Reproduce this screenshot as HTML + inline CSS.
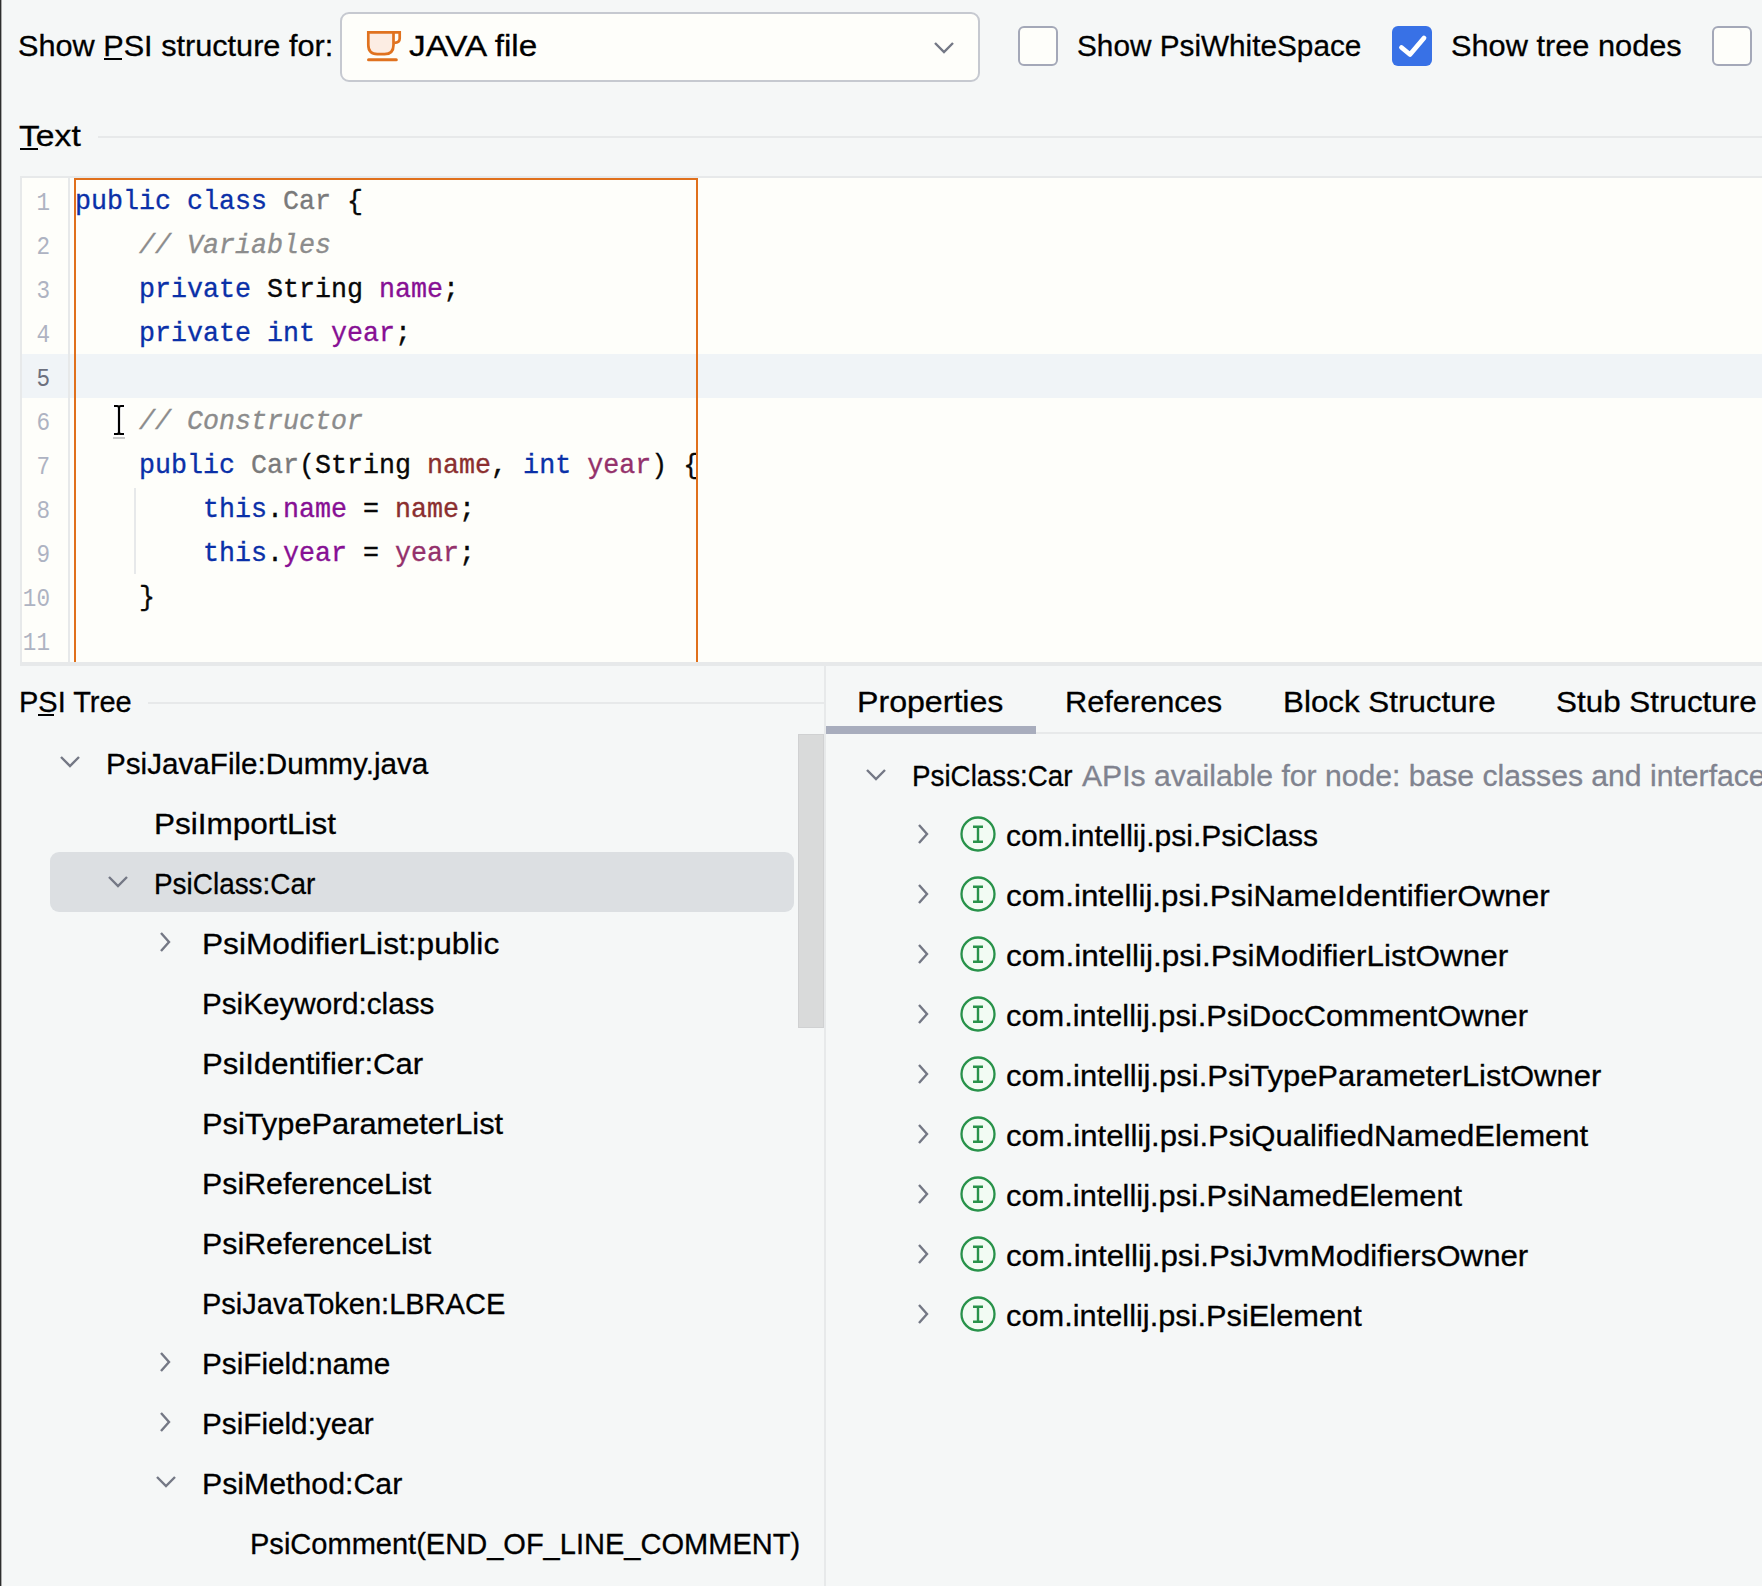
<!DOCTYPE html>
<html><head><meta charset="utf-8">
<style>
*{margin:0;padding:0;box-sizing:border-box}
html,body{width:1762px;height:1586px;overflow:hidden;background:#F5F7F7;position:relative;font-family:"Liberation Sans",sans-serif;color:#000}
.abs{position:absolute}
.t{position:absolute;white-space:nowrap;font-size:30px;line-height:30px;transform-origin:0 0;-webkit-text-stroke:0.3px currentColor}
.ul{position:absolute;height:2px;background:#000}
.sep{position:absolute;height:2px;background:#E7E9EA}
.cb{position:absolute;width:40px;height:40px;border:2px solid #A4A8B8;border-radius:6px;background:#FEFEFA}
.code{position:absolute;left:74.5px;font-size:28px;line-height:44px;white-space:pre;font-family:"Liberation Mono",monospace;color:#080808;transform-origin:0 0;transform:scaleX(0.95238);-webkit-text-stroke:0.35px currentColor}
.ln{position:absolute;left:0px;width:50px;text-align:right;font-size:26px;transform-origin:100% 0;transform:scaleX(0.87);line-height:44px;font-family:"Liberation Mono",monospace;color:#AEB3C2}
.kw{color:#0A30A8}
.cm{color:#8C8C8C;font-style:italic}
.fld{color:#871094}
.gry{color:#7A7A7A}
.p1{color:#8B2F2F}
.p2{color:#94316B}
</style></head><body>
<div class="abs" style="left:0;top:0;width:1px;height:1586px;background:#2E2E2E"></div><div class="abs" style="left:1px;top:0;width:1px;height:1586px;background:#A9AAAA"></div>

<div class="t" style="left:18.36px;top:30.5px;transform:scaleX(1.022);color:#000">Show PSI structure for:</div>
<div class="ul" style="left:104px;top:58px;width:18px"></div>
<div class="abs" style="left:340px;top:12px;width:640px;height:70px;border:2px solid #C6C9D0;border-radius:9px;background:#FEFEFA"></div>
<svg class="abs" style="left:364px;top:28px" width="40" height="36" viewBox="0 0 40 36">
  <path d="M4.3 4.3 H29.5 V17 Q29.5 26.2 20.5 26.2 H13.3 Q4.3 26.2 4.3 17 Z" fill="#FCEDE3" stroke="#E0721F" stroke-width="2.7"/>
  <path d="M29.5 4.3 H35.7 V10.5 Q35.7 14.8 30.2 14.8" fill="none" stroke="#E0721F" stroke-width="2.7"/>
  <line x1="4.5" y1="31.7" x2="32.3" y2="31.7" stroke="#E0721F" stroke-width="3" stroke-linecap="round"/>
</svg>
<div class="t" style="left:409.19px;top:30.5px;transform:scaleX(1.1088);color:#000">JAVA file</div>
<svg class="abs" style="left:932px;top:40px" width="24" height="16" viewBox="0 0 24 16"><path d="M3 3 L12.0 12 L21 3" fill="none" stroke="#747885" stroke-width="2.4" stroke-linecap="butt"/></svg>
<div class="cb" style="left:1018px;top:26px"></div>
<div class="t" style="left:1076.72px;top:30.5px;transform:scaleX(0.9915);color:#000">Show PsiWhiteSpace</div>
<div class="abs" style="left:1392px;top:26px;width:40px;height:40px;border-radius:6px;background:#3871E6"></div>
<svg class="abs" style="left:1392px;top:26px" width="40" height="40" viewBox="0 0 40 40"><path d="M9.5 21.5 L18 28.5 L32 12" fill="none" stroke="#FFFFFF" stroke-width="4.8" stroke-linecap="round" stroke-linejoin="round"/></svg>
<div class="t" style="left:1450.75px;top:30.5px;transform:scaleX(1.0248);color:#000">Show tree nodes</div>
<div class="cb" style="left:1712px;top:26px"></div>
<div class="t" style="left:19.08px;top:120.5px;transform:scaleX(1.1222);color:#000">Text</div>
<div class="ul" style="left:20px;top:148px;width:18px"></div>
<div class="sep" style="left:98px;top:136px;width:1664px"></div>
<div class="abs" style="left:20px;top:176px;width:1742px;height:490px;background:#E7E9EA"></div>
<div class="abs" style="left:22px;top:178px;width:1740px;height:484px;background:#FEFEFA"></div>
<div class="abs" style="left:0;top:0;width:1762px;height:662px;overflow:hidden">
<div class="abs" style="left:22px;top:354px;width:1740px;height:44px;background:#F0F4F7"></div>
<div class="abs" style="left:68px;top:178px;width:2px;height:484px;background:#E7E9EA"></div>
<div class="ln" style="top:181px">1</div>
<div class="ln" style="top:225px">2</div>
<div class="ln" style="top:269px">3</div>
<div class="ln" style="top:313px">4</div>
<div class="ln" style="top:357px;color:#6C707E">5</div>
<div class="ln" style="top:401px">6</div>
<div class="ln" style="top:445px">7</div>
<div class="ln" style="top:489px">8</div>
<div class="ln" style="top:533px">9</div>
<div class="ln" style="top:577px">10</div>
<div class="ln" style="top:621px">11</div>
<div class="abs" style="left:134px;top:488px;width:2px;height:86px;background:#E7E9EA"></div>
<div class="code" style="top:180px"><span class="kw">public class</span> <span class="gry">Car</span> {</div>
<div class="code" style="top:224px">    <span class="cm">// Variables</span></div>
<div class="code" style="top:268px">    <span class="kw">private</span> String <span class="fld">name</span>;</div>
<div class="code" style="top:312px">    <span class="kw">private int</span> <span class="fld">year</span>;</div>
<div class="code" style="top:400px">    <span class="cm">// Constructor</span></div>
<div class="code" style="top:444px">    <span class="kw">public</span> <span class="gry">Car</span>(String <span class="p1">name</span>, <span class="kw">int</span> <span class="p2">year</span>) {</div>
<div class="code" style="top:488px">        <span class="kw">this</span>.<span class="fld">name</span> = <span class="p1">name</span>;</div>
<div class="code" style="top:532px">        <span class="kw">this</span>.<span class="fld">year</span> = <span class="p2">year</span>;</div>
<div class="code" style="top:576px">    }</div>
<div class="abs" style="left:74px;top:178px;width:624px;height:520px;border:2px solid #E0701C"></div>
</div>
<svg class="abs" style="left:108px;top:400px" width="24" height="42" viewBox="0 0 24 42">
  <path d="M5 38 H17" stroke="#BDBDBD" stroke-width="2" opacity="0.8"/>
  <path d="M6 6 H9 Q11 6 11 8 V32 Q11 34 9 34 H6 M16 6 H13 Q11 6 11 8 M11 32 Q11 34 13 34 H16" fill="none" stroke="#FFFFFF" stroke-width="5.5" stroke-linecap="square"/>
  <path d="M6 6 H9 Q11 6 11 8 V32 Q11 34 9 34 H6 M16 6 H13 Q11 6 11 8 M11 32 Q11 34 13 34 H16" fill="none" stroke="#000000" stroke-width="2.2"/>
</svg>
<div class="abs" style="left:20px;top:662px;width:1742px;height:4px;background:#E7E9EA"></div>
<div class="abs" style="left:824px;top:666px;width:2px;height:920px;background:#E7E9EA"></div>
<div class="t" style="left:19.47px;top:686.5px;transform:scaleX(0.9655);color:#000">PSI Tree</div>
<div class="ul" style="left:38px;top:714px;width:16px"></div>
<div class="sep" style="left:148px;top:702px;width:676px"></div>
<div class="abs" style="left:50px;top:852px;width:744px;height:60px;border-radius:9px;background:#DCDFE2"></div>
<div class="abs" style="left:798px;top:734px;width:26px;height:294px;background:#D9DADA;border:1px solid #D0D1D2"></div>
<svg class="abs" style="left:58px;top:754px" width="24" height="16" viewBox="0 0 24 16"><path d="M3 3 L12.0 12 L21 3" fill="none" stroke="#747885" stroke-width="2.4" stroke-linecap="butt"/></svg>
<div class="t" style="left:105.82px;top:748.5px;transform:scaleX(0.988);color:#000">PsiJavaFile:Dummy.java</div>
<div class="t" style="left:153.7px;top:808.5px;transform:scaleX(1.0497);color:#000">PsiImportList</div>
<svg class="abs" style="left:106px;top:874px" width="24" height="16" viewBox="0 0 24 16"><path d="M3 3 L12.0 12 L21 3" fill="none" stroke="#747885" stroke-width="2.4" stroke-linecap="butt"/></svg>
<div class="t" style="left:153.94px;top:868.5px;transform:scaleX(0.9304);color:#000">PsiClass:Car</div>
<svg class="abs" style="left:158px;top:930px" width="15" height="24" viewBox="0 0 15 24"><path d="M3 3 L11 12.0 L3 21" fill="none" stroke="#747885" stroke-width="2.4" stroke-linecap="butt"/></svg>
<div class="t" style="left:202.09px;top:928.5px;transform:scaleX(1.0548);color:#000">PsiModifierList:public</div>
<div class="t" style="left:202.22px;top:988.5px;transform:scaleX(0.9884);color:#000">PsiKeyword:class</div>
<div class="t" style="left:202.13px;top:1048.5px;transform:scaleX(1.0365);color:#000">PsiIdentifier:Car</div>
<div class="t" style="left:202.15px;top:1108.5px;transform:scaleX(1.0261);color:#000">PsiTypeParameterList</div>
<div class="t" style="left:202.18px;top:1168.5px;transform:scaleX(1.0111);color:#000">PsiReferenceList</div>
<div class="t" style="left:202.18px;top:1228.5px;transform:scaleX(1.0111);color:#000">PsiReferenceList</div>
<div class="t" style="left:202.27px;top:1288.5px;transform:scaleX(0.9674);color:#000">PsiJavaToken:LBRACE</div>
<svg class="abs" style="left:158px;top:1350px" width="15" height="24" viewBox="0 0 15 24"><path d="M3 3 L11 12.0 L3 21" fill="none" stroke="#747885" stroke-width="2.4" stroke-linecap="butt"/></svg>
<div class="t" style="left:202.22px;top:1348.5px;transform:scaleX(0.9904);color:#000">PsiField:name</div>
<svg class="abs" style="left:158px;top:1410px" width="15" height="24" viewBox="0 0 15 24"><path d="M3 3 L11 12.0 L3 21" fill="none" stroke="#747885" stroke-width="2.4" stroke-linecap="butt"/></svg>
<div class="t" style="left:202.22px;top:1408.5px;transform:scaleX(0.9901);color:#000">PsiField:year</div>
<svg class="abs" style="left:154px;top:1474px" width="24" height="16" viewBox="0 0 24 16"><path d="M3 3 L12.0 12 L21 3" fill="none" stroke="#747885" stroke-width="2.4" stroke-linecap="butt"/></svg>
<div class="t" style="left:202.18px;top:1468.5px;transform:scaleX(1.0092);color:#000">PsiMethod:Car</div>
<div class="t" style="left:250.06px;top:1528.5px;transform:scaleX(0.9678);color:#000">PsiComment(END_OF_LINE_COMMENT)</div>
<div class="t" style="left:857.06px;top:686.5px;transform:scaleX(1.0709);color:#000">Properties</div>
<div class="t" style="left:1064.55px;top:686.5px;transform:scaleX(1.0247);color:#000">References</div>
<div class="t" style="left:1282.61px;top:686.5px;transform:scaleX(1.045);color:#000">Block Structure</div>
<div class="t" style="left:1556.31px;top:686.5px;transform:scaleX(1.0468);color:#000">Stub Structure</div>
<div class="sep" style="left:826px;top:732px;width:936px"></div>
<div class="abs" style="left:826px;top:726px;width:210px;height:8px;background:#A8ADBD"></div>
<svg class="abs" style="left:864px;top:767px" width="24" height="16" viewBox="0 0 24 16"><path d="M3 3 L12.0 12 L21 3" fill="none" stroke="#747885" stroke-width="2.4" stroke-linecap="butt"/></svg>
<div class="t" style="left:911.85px;top:760.5px;transform:scaleX(0.9257);color:#000">PsiClass:Car</div>
<div class="t" style="left:1081.8px;top:760.5px;transform:scaleX(1.0047);color:#80838F">APIs available for node: base classes and interfaces</div>
<svg class="abs" style="left:916px;top:822px" width="15" height="24" viewBox="0 0 15 24"><path d="M3 3 L11 12.0 L3 21" fill="none" stroke="#747885" stroke-width="2.4" stroke-linecap="butt"/></svg>
<svg class="abs" style="left:958px;top:814px" width="40" height="40" viewBox="0 0 40 40"><circle cx="20" cy="20" r="16.5" fill="#F2FBF3" stroke="#28924A" stroke-width="2.3"/><path d="M15 12.8 H25 M15 27.8 H25 M20 12.8 V27.8" fill="none" stroke="#28924A" stroke-width="2.4"/></svg>
<div class="t" style="left:1006.3px;top:820.5px;transform:scaleX(1.001);color:#000">com.intellij.psi.PsiClass</div>
<svg class="abs" style="left:916px;top:882px" width="15" height="24" viewBox="0 0 15 24"><path d="M3 3 L11 12.0 L3 21" fill="none" stroke="#747885" stroke-width="2.4" stroke-linecap="butt"/></svg>
<svg class="abs" style="left:958px;top:874px" width="40" height="40" viewBox="0 0 40 40"><circle cx="20" cy="20" r="16.5" fill="#F2FBF3" stroke="#28924A" stroke-width="2.3"/><path d="M15 12.8 H25 M15 27.8 H25 M20 12.8 V27.8" fill="none" stroke="#28924A" stroke-width="2.4"/></svg>
<div class="t" style="left:1006.25px;top:880.5px;transform:scaleX(1.0451);color:#000">com.intellij.psi.PsiNameIdentifierOwner</div>
<svg class="abs" style="left:916px;top:942px" width="15" height="24" viewBox="0 0 15 24"><path d="M3 3 L11 12.0 L3 21" fill="none" stroke="#747885" stroke-width="2.4" stroke-linecap="butt"/></svg>
<svg class="abs" style="left:958px;top:934px" width="40" height="40" viewBox="0 0 40 40"><circle cx="20" cy="20" r="16.5" fill="#F2FBF3" stroke="#28924A" stroke-width="2.3"/><path d="M15 12.8 H25 M15 27.8 H25 M20 12.8 V27.8" fill="none" stroke="#28924A" stroke-width="2.4"/></svg>
<div class="t" style="left:1006.25px;top:940.5px;transform:scaleX(1.0495);color:#000">com.intellij.psi.PsiModifierListOwner</div>
<svg class="abs" style="left:916px;top:1002px" width="15" height="24" viewBox="0 0 15 24"><path d="M3 3 L11 12.0 L3 21" fill="none" stroke="#747885" stroke-width="2.4" stroke-linecap="butt"/></svg>
<svg class="abs" style="left:958px;top:994px" width="40" height="40" viewBox="0 0 40 40"><circle cx="20" cy="20" r="16.5" fill="#F2FBF3" stroke="#28924A" stroke-width="2.3"/><path d="M15 12.8 H25 M15 27.8 H25 M20 12.8 V27.8" fill="none" stroke="#28924A" stroke-width="2.4"/></svg>
<div class="t" style="left:1006.27px;top:1000.5px;transform:scaleX(1.0264);color:#000">com.intellij.psi.PsiDocCommentOwner</div>
<svg class="abs" style="left:916px;top:1062px" width="15" height="24" viewBox="0 0 15 24"><path d="M3 3 L11 12.0 L3 21" fill="none" stroke="#747885" stroke-width="2.4" stroke-linecap="butt"/></svg>
<svg class="abs" style="left:958px;top:1054px" width="40" height="40" viewBox="0 0 40 40"><circle cx="20" cy="20" r="16.5" fill="#F2FBF3" stroke="#28924A" stroke-width="2.3"/><path d="M15 12.8 H25 M15 27.8 H25 M20 12.8 V27.8" fill="none" stroke="#28924A" stroke-width="2.4"/></svg>
<div class="t" style="left:1006.27px;top:1060.5px;transform:scaleX(1.0318);color:#000">com.intellij.psi.PsiTypeParameterListOwner</div>
<svg class="abs" style="left:916px;top:1122px" width="15" height="24" viewBox="0 0 15 24"><path d="M3 3 L11 12.0 L3 21" fill="none" stroke="#747885" stroke-width="2.4" stroke-linecap="butt"/></svg>
<svg class="abs" style="left:958px;top:1114px" width="40" height="40" viewBox="0 0 40 40"><circle cx="20" cy="20" r="16.5" fill="#F2FBF3" stroke="#28924A" stroke-width="2.3"/><path d="M15 12.8 H25 M15 27.8 H25 M20 12.8 V27.8" fill="none" stroke="#28924A" stroke-width="2.4"/></svg>
<div class="t" style="left:1006.26px;top:1120.5px;transform:scaleX(1.0362);color:#000">com.intellij.psi.PsiQualifiedNamedElement</div>
<svg class="abs" style="left:916px;top:1182px" width="15" height="24" viewBox="0 0 15 24"><path d="M3 3 L11 12.0 L3 21" fill="none" stroke="#747885" stroke-width="2.4" stroke-linecap="butt"/></svg>
<svg class="abs" style="left:958px;top:1174px" width="40" height="40" viewBox="0 0 40 40"><circle cx="20" cy="20" r="16.5" fill="#F2FBF3" stroke="#28924A" stroke-width="2.3"/><path d="M15 12.8 H25 M15 27.8 H25 M20 12.8 V27.8" fill="none" stroke="#28924A" stroke-width="2.4"/></svg>
<div class="t" style="left:1006.27px;top:1180.5px;transform:scaleX(1.0285);color:#000">com.intellij.psi.PsiNamedElement</div>
<svg class="abs" style="left:916px;top:1242px" width="15" height="24" viewBox="0 0 15 24"><path d="M3 3 L11 12.0 L3 21" fill="none" stroke="#747885" stroke-width="2.4" stroke-linecap="butt"/></svg>
<svg class="abs" style="left:958px;top:1234px" width="40" height="40" viewBox="0 0 40 40"><circle cx="20" cy="20" r="16.5" fill="#F2FBF3" stroke="#28924A" stroke-width="2.3"/><path d="M15 12.8 H25 M15 27.8 H25 M20 12.8 V27.8" fill="none" stroke="#28924A" stroke-width="2.4"/></svg>
<div class="t" style="left:1006.26px;top:1240.5px;transform:scaleX(1.0408);color:#000">com.intellij.psi.PsiJvmModifiersOwner</div>
<svg class="abs" style="left:916px;top:1302px" width="15" height="24" viewBox="0 0 15 24"><path d="M3 3 L11 12.0 L3 21" fill="none" stroke="#747885" stroke-width="2.4" stroke-linecap="butt"/></svg>
<svg class="abs" style="left:958px;top:1294px" width="40" height="40" viewBox="0 0 40 40"><circle cx="20" cy="20" r="16.5" fill="#F2FBF3" stroke="#28924A" stroke-width="2.3"/><path d="M15 12.8 H25 M15 27.8 H25 M20 12.8 V27.8" fill="none" stroke="#28924A" stroke-width="2.4"/></svg>
<div class="t" style="left:1006.27px;top:1300.5px;transform:scaleX(1.0257);color:#000">com.intellij.psi.PsiElement</div>
</body></html>
